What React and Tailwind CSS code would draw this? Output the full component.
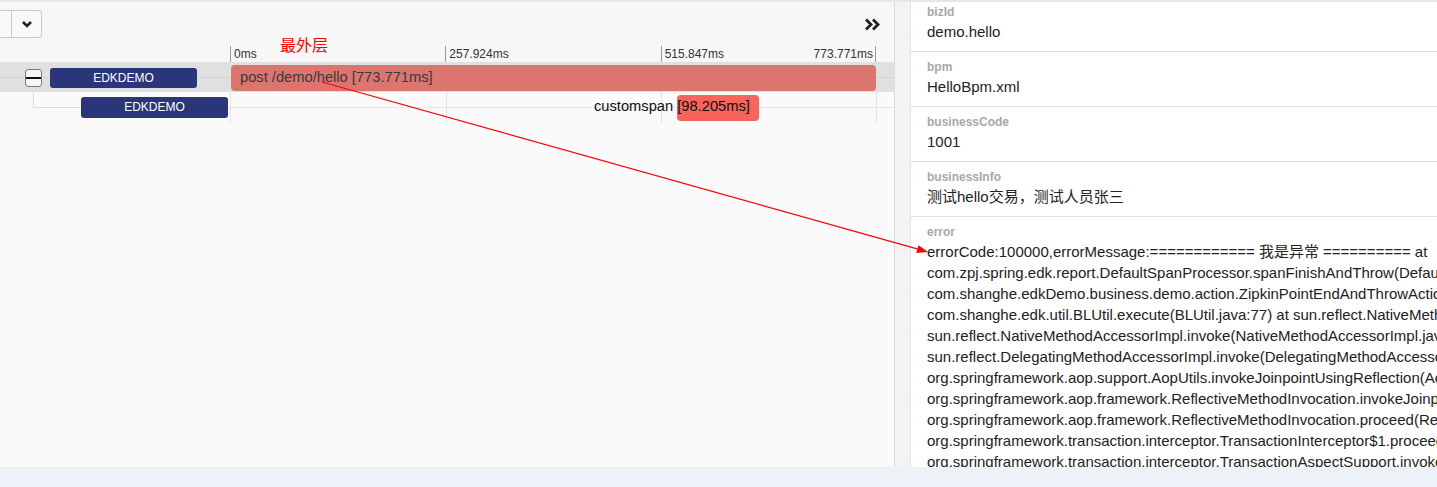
import React from 'react';

const ticks = [230, 446, 661, 876];

const errorLines = [
  'errorCode:100000,errorMessage:============ 我是异常 ========== at',
  'com.zpj.spring.edk.report.DefaultSpanProcessor.spanFinishAndThrow(DefaultSpanProcessor.java:93) at',
  'com.shanghe.edkDemo.business.demo.action.ZipkinPointEndAndThrowAction.execute(ZipkinPointEndAndThrowAction.java:31) at',
  'com.shanghe.edk.util.BLUtil.execute(BLUtil.java:77) at sun.reflect.NativeMethodAccessorImpl.invoke0(Native Method) at',
  'sun.reflect.NativeMethodAccessorImpl.invoke(NativeMethodAccessorImpl.java:62) at',
  'sun.reflect.DelegatingMethodAccessorImpl.invoke(DelegatingMethodAccessorImpl.java:43) at',
  'org.springframework.aop.support.AopUtils.invokeJoinpointUsingReflection(AopUtils.java:333) at',
  'org.springframework.aop.framework.ReflectiveMethodInvocation.invokeJoinpoint(ReflectiveMethodInvocation.java:190) at',
  'org.springframework.aop.framework.ReflectiveMethodInvocation.proceed(ReflectiveMethodInvocation.java:157) at',
  'org.springframework.transaction.interceptor.TransactionInterceptor$1.proceedWithInvocation(TransactionInterceptor.java:99) at',
  'org.springframework.transaction.interceptor.TransactionAspectSupport.invokeWithinTransaction(TransactionAspectSupport.java:282) at',
];

const tags = [
  { key: 'bizId', value: 'demo.hello' },
  { key: 'bpm', value: 'HelloBpm.xml' },
  { key: 'businessCode', value: '1001' },
  { key: 'businessInfo', value: '测试hello交易，测试人员张三' },
];

function ServiceBadge({ h }) {
  return (
    <div className={`w-[147px] rounded-[3px] bg-[#2b3579] text-white text-[12px] text-center ${h === 21 ? 'h-[21px] leading-[21px]' : 'h-[20px] leading-[20px]'}`}>
      EDKDEMO
    </div>
  );
}

function TagItem({ name, children, first }) {
  return (
    <div className={`border-b border-[#dedede] pl-4 pb-[9px] ${first ? 'pt-[1px]' : 'pt-[6px]'}`}>
      <div className="text-[12px] leading-[18px] font-bold text-[#a8a8a8]">{name}</div>
      {children}
    </div>
  );
}

export default function App() {
  return (
    <div className="relative w-[1437px] h-[487px] overflow-hidden flex flex-col bg-white font-['Liberation_Sans','Noto_Sans_CJK_SC',sans-serif] text-[#333]">
      <div className="h-[467px] flex border-t-2 border-[#e3e6ea]">
        {/* trace timeline */}
        <div className="w-[895px] shrink-0 flex flex-col bg-[#fafafa] border-r border-[#dcdcdc]">
          <div className="h-[44px] flex items-start justify-between bg-[#f7f7f7]">
            <div className="mt-[8px] flex h-[28px]">
              <div className="w-[12px] border-y border-r border-[#c8c8c8] bg-[#f9f9f9]" />
              <div className="w-[30px] flex items-center justify-center border-y border-r border-[#c8c8c8] rounded-r-[4px] bg-[#f9f9f9]">
                <svg width="12" height="8" viewBox="0 0 12 8">
                  <path d="M2 2 L6 6 L10 2" fill="none" stroke="#222" strokeWidth="2.6" />
                </svg>
              </div>
            </div>
            <div className="mt-[16px] mr-[14px]">
              <svg width="16" height="13" viewBox="0 0 16 13">
                <path d="M2 1.5 L7 6.5 L2 11.5" fill="none" stroke="#222" strokeWidth="2.8" />
                <path d="M9 1.5 L14 6.5 L9 11.5" fill="none" stroke="#222" strokeWidth="2.8" />
              </svg>
            </div>
          </div>

          <div className="relative">
            {/* gridlines */}
            {ticks.map((x) => (
              <div key={x} className="absolute top-0 h-[77px] w-px bg-[#e2e2e2]" style={{ left: x }} />
            ))}

            <div className="relative h-[16px] flex bg-[#f7f7f7]">
              <div className="w-[230px] shrink-0" />
              <div className="w-[646px] grid grid-cols-3 text-[12px] leading-[16px] text-[#333]">
                <div className="border-l border-[#9a9a9a] pl-[3px]">0ms</div>
                <div className="border-l border-[#9a9a9a] pl-[3px]">257.924ms</div>
                <div className="border-l border-r border-[#9a9a9a] pl-[3px] pr-[2px] flex justify-between">
                  <span>515.847ms</span>
                  <span>773.771ms</span>
                </div>
              </div>
              <div className="absolute left-[280px] -top-[9px] text-[16px] leading-[18px] text-[#ff0000]">最外层</div>
            </div>

            {/* row 1 */}
            <div className="relative h-[30px] flex bg-[#e0e0e0]">
              <div className="absolute left-0 right-0 top-[15px] h-px bg-[#d4d4d4]" />
              <div className="relative w-[230px] shrink-0 flex items-start pl-[25px] pt-[6px] gap-[8px]">
                <div className="mt-[1px] w-[17px] h-[18px] rounded-[3px] border-[1.5px] border-[#7a7a7a] bg-[#f6f6f6] flex items-center">
                  <div className="w-full h-[2px] bg-[#111]" />
                </div>
                <ServiceBadge h={20} />
              </div>
              <div className="relative w-[646px] pt-[3px]">
                <div className="ml-[1px] h-[26px] rounded-[4px] bg-[#dd756f] text-[14.7px] leading-[24px] pl-[9px] text-[#3a3a3a] whitespace-nowrap">
                  post /demo/hello [773.771ms]
                </div>
              </div>
            </div>

            {/* row 2 */}
            <div className="relative h-[30px] flex">
              <div className="absolute left-[81px] right-0 top-[15px] h-px bg-[#e6e6e6]" />
              <div className="relative w-[230px] shrink-0 flex items-start">
                <div className="ml-[33px] w-[48px] h-[16px] border-l border-b border-[#dcdcdc]" />
                <div className="mt-[5px]">
                  <ServiceBadge h={21} />
                </div>
              </div>
              <div className="relative w-[646px] pt-[3px]">
                <div className="ml-[447px] w-[82px] h-[26px] rounded-[4px] bg-[#f6645c]" />
                <div className="absolute left-[364px] top-[5px] text-[14.7px] leading-[18px] text-[#111] whitespace-nowrap">
                  customspan [98.205ms]
                </div>
              </div>
            </div>
          </div>
          <div className="flex-1" />
        </div>

        {/* scrollbar gutter */}
        <div className="w-[16px] shrink-0 bg-[#f3f3f3] border-r border-[#e4e4e4]" />

        {/* tags panel */}
        <div className="flex-1 min-w-0 overflow-hidden bg-white">
          {tags.map((t, i) => (
            <TagItem key={t.key} name={t.key} first={i === 0}>
              <div className="text-[15px] leading-[21px] text-[#222] whitespace-nowrap">{t.value}</div>
            </TagItem>
          ))}
          <TagItem name="error">
            {errorLines.map((line, i) => (
              <div key={i} className="text-[15px] leading-[21px] text-[#222] whitespace-nowrap">
                {line}
              </div>
            ))}
          </TagItem>
        </div>
      </div>
      <div className="h-[20px] bg-[#edf2f9]" />

      {/* annotation arrow */}
      <svg className="absolute left-0 top-0 pointer-events-none" width="1437" height="487">
        <line x1="322" y1="82" x2="918" y2="249.2" stroke="#ff0000" strokeWidth="1.2" />
        <polygon points="928,252 916.3,252.9 918.5,245.2" fill="#ff0000" />
      </svg>
    </div>
  );
}
